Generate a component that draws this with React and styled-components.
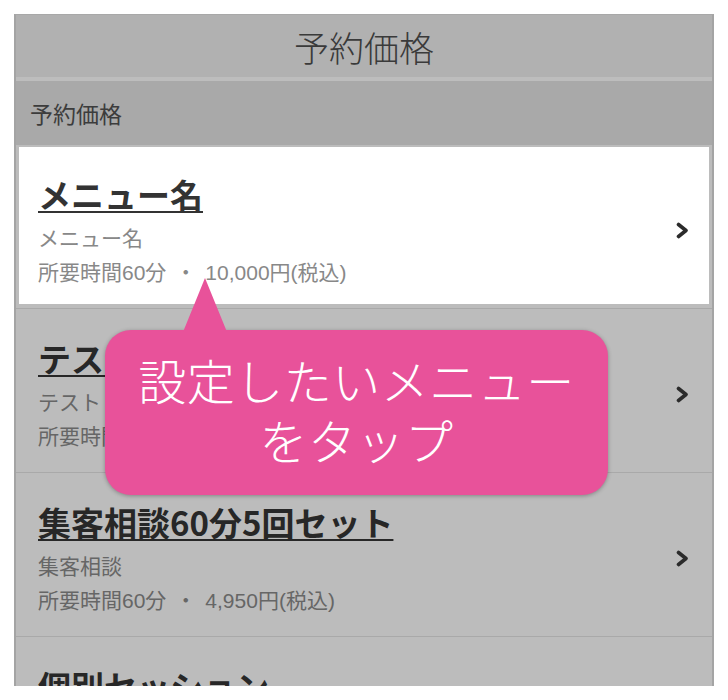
import React from "react";
import styled, { createGlobalStyle } from "styled-components";

const GlobalStyle = createGlobalStyle`
  html, body {
    margin: 0;
    padding: 0;
    background: #ffffff;
  }
  body {
    font-family: "Noto Sans CJK JP", "Noto Sans", sans-serif;
  }
`;

const Page = styled.div`
  position: relative;
  width: 728px;
  height: 700px;
  padding: 14px 14px 0;
  box-sizing: border-box;
  background: #ffffff;
`;

const Frame = styled.div`
  height: 672px;
  overflow: hidden;
  border-left: 2px solid #a4a4a4;
  border-right: 2px solid #a4a4a4;
  border-top: 1px solid #a8a8a8;
  box-sizing: border-box;
  background: #bbbbbb;
  display: flex;
  flex-direction: column;
`;

const NavBar = styled.header`
  height: 62px;
  flex: none;
  display: flex;
  align-items: center;
  justify-content: center;
  background: #b1b1b1;
  border-bottom: 4px solid #bdbdbd;
  font-size: 35px;
  font-weight: 300;
  color: #3a3a3a;
`;

const SectionHeader = styled.div`
  height: 64px;
  flex: none;
  display: flex;
  align-items: center;
  padding-left: 14px;
  background: #a9a9a9;
  font-size: 23px;
  color: #3c3c3c;
`;

const List = styled.ul`
  list-style: none;
  margin: 0;
  padding: 0;
  flex: none;
`;

const Row = styled.li`
  padding: 2px 3px 4px;
  background: #bcbcbc;
  border-bottom: 1px solid #a9a9a9;
`;

const RowInner = styled.div`
  display: flex;
  align-items: center;
  padding: 27px 19px 17px 19px;
  background: ${(p) => (p.$highlight ? "#ffffff" : "transparent")};
`;

const RowText = styled.div`
  flex: 1;
  display: flex;
  flex-direction: column;
`;

const Title = styled.div`
  height: 40px;
  font-size: 33px;
  line-height: 40px;
  font-weight: 700;
  color: ${(p) => (p.$highlight ? "#333333" : "#272727")};
  margin-bottom: 9px;
  span {
    text-decoration: underline;
    text-decoration-thickness: 2px;
    text-underline-offset: 3px;
  }
`;

const Meta = styled.div`
  height: 32px;
  font-family: "Liberation Sans", "Noto Sans CJK JP", sans-serif;
  font-size: 21px;
  line-height: 32px;
  color: ${(p) => (p.$highlight ? "#888888" : "#666666")};
  white-space: nowrap;
`;

const Dot = styled.span`
  margin: 0 9px;
  font-family: "Noto Sans CJK JP", sans-serif;
`;

const Chevron = styled.svg`
  width: 15px;
  height: 17px;
  flex: none;
`;

const Bubble = styled.div`
  position: absolute;
  left: 105px;
  top: 330px;
  width: 503px;
  height: 165px;
  border-radius: 26px;
  background: #e8529a;
  box-shadow: 0 1px 4px rgba(0, 0, 0, 0.3);
  display: flex;
  flex-direction: column;
  align-items: center;
  justify-content: center;
  color: #ffffff;
  font-size: 48px;
  line-height: 60px;
  font-weight: 300;
  padding-bottom: 8px;
  box-sizing: border-box;

  &::before {
    content: "";
    position: absolute;
    left: 78px;
    top: -52px;
    width: 44px;
    height: 54px;
    background: #e8529a;
    clip-path: polygon(50% 0, 100% 100%, 0 100%);
  }
`;

const BubbleLine = styled.div`
  position: relative;
  letter-spacing: 0.5px;
`;

const menus = [
  { title: "メニュー名", sub: "メニュー名", time: "所要時間60分", price: "10,000円(税込)", highlight: true },
  { title: "テスト", sub: "テスト", time: "所要時間60分", price: "1,000円(税込)" },
  { title: "集客相談60分5回セット", sub: "集客相談", time: "所要時間60分", price: "4,950円(税込)" },
  { title: "個別セッション", sub: "個別セッション", time: "所要時間60分", price: "5,500円(税込)" },
];

function ChevronIcon() {
  return (
    <Chevron viewBox="0 0 15 17">
      <polyline
        points="3.5,2.5 11,8.5 3.5,14.5"
        fill="none"
        stroke="#2b2b2b"
        strokeWidth="3.6"
        strokeLinecap="round"
        strokeLinejoin="round"
      />
    </Chevron>
  );
}

export default function App() {
  return (
    <>
      <GlobalStyle />
      <Page>
        <Frame>
          <NavBar>予約価格</NavBar>
          <SectionHeader>予約価格</SectionHeader>
          <List>
            {menus.map((m) => (
              <Row key={m.title}>
                <RowInner $highlight={m.highlight}>
                  <RowText>
                    <Title $highlight={m.highlight}>
                      <span>{m.title}</span>
                    </Title>
                    <Meta $highlight={m.highlight}>{m.sub}</Meta>
                    <Meta $highlight={m.highlight}>
                      {m.time}
                      <Dot>・</Dot>
                      {m.price}
                    </Meta>
                  </RowText>
                  <ChevronIcon />
                </RowInner>
              </Row>
            ))}
          </List>
        </Frame>
        <Bubble>
          <BubbleLine>設定したいメニュー</BubbleLine>
          <BubbleLine>をタップ</BubbleLine>
        </Bubble>
      </Page>
    </>
  );
}
